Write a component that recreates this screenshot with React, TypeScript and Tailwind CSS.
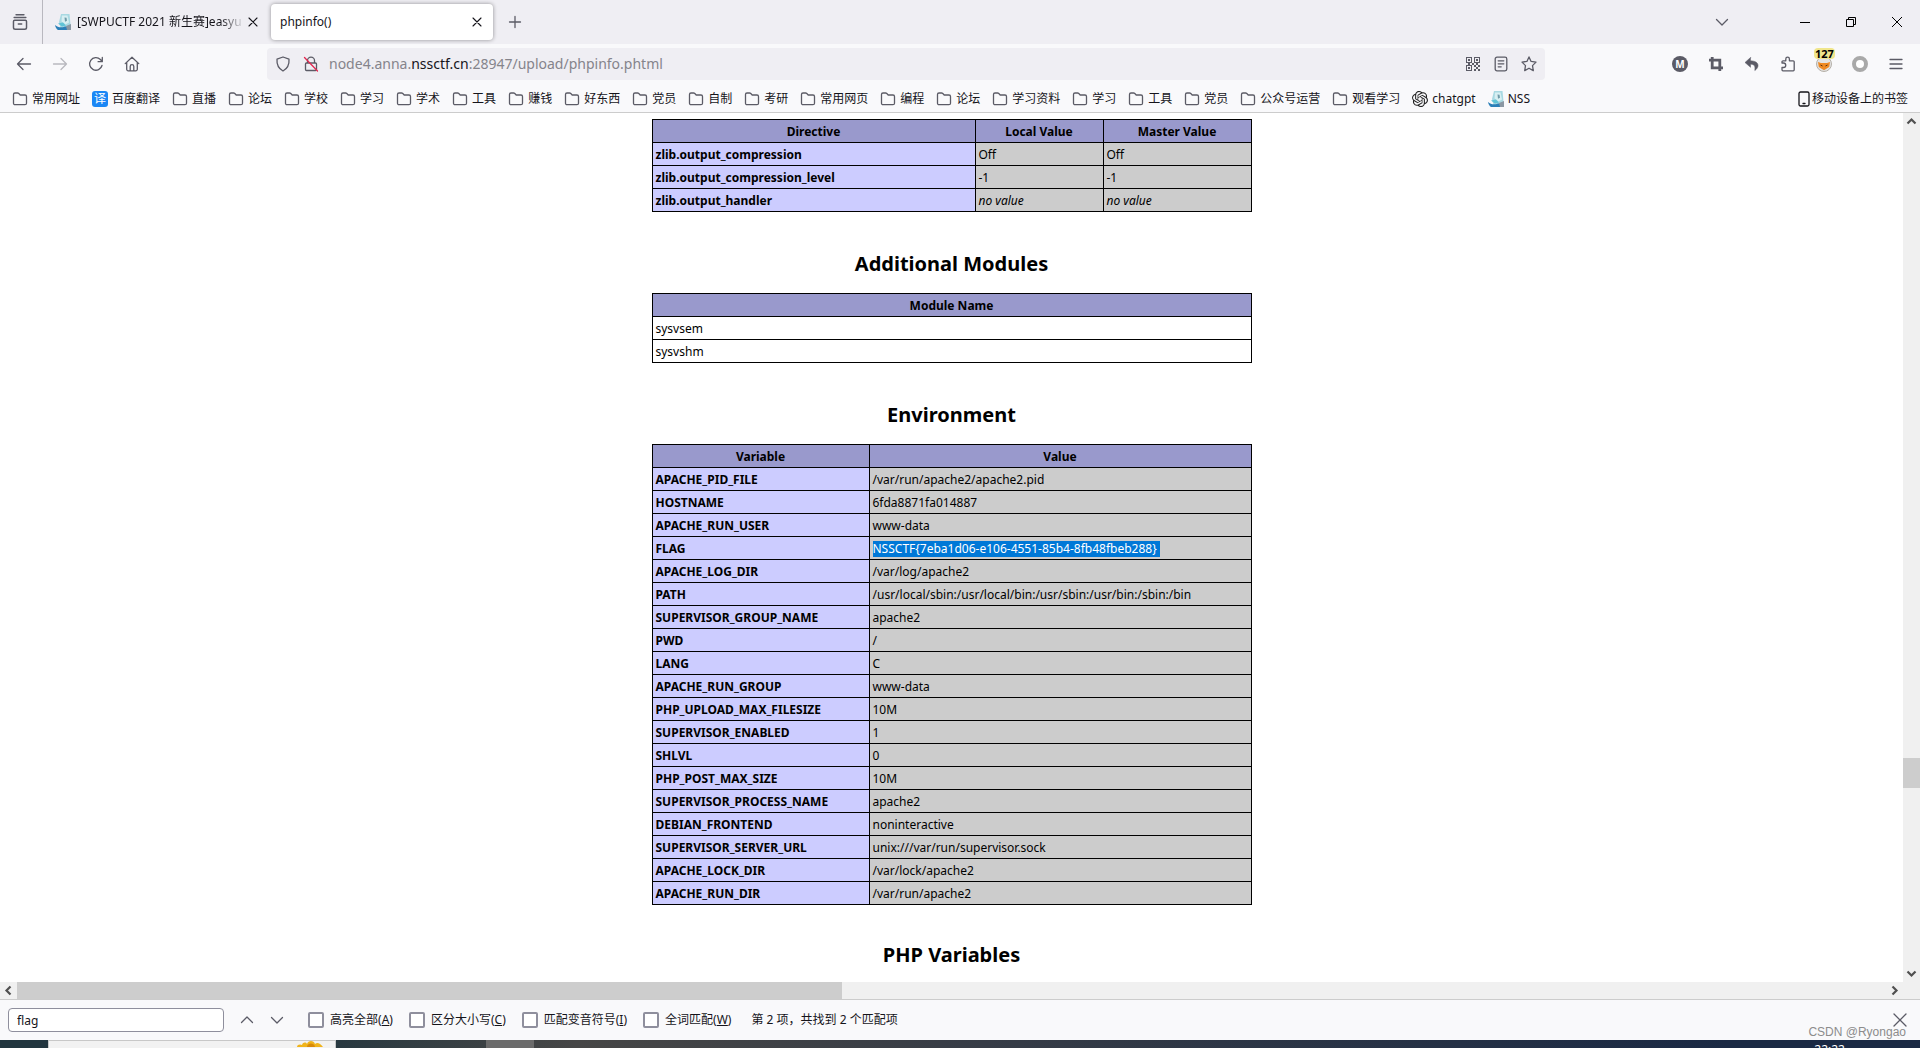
import type { ReactNode } from "react";
import { SiOpenai } from "react-icons/si";

type Row = { name: string; value: string; selected?: boolean };

const DIRECTIVES = [
    { name: "zlib.output_compression", local: "Off", master: "Off" },
    { name: "zlib.output_compression_level", local: "-1", master: "-1" },
    { name: "zlib.output_handler", local: "", master: "" },
];

const MODULES = ["sysvsem", "sysvshm"];

const ENVIRONMENT: Row[] = [
    { name: "APACHE_PID_FILE", value: "/var/run/apache2/apache2.pid" },
    { name: "HOSTNAME", value: "6fda8871fa014887" },
    { name: "APACHE_RUN_USER", value: "www-data" },
    { name: "FLAG", value: "NSSCTF{7eba1d06-e106-4551-85b4-8fb48fbeb288}", selected: true },
    { name: "APACHE_LOG_DIR", value: "/var/log/apache2" },
    { name: "PATH", value: "/usr/local/sbin:/usr/local/bin:/usr/sbin:/usr/bin:/sbin:/bin" },
    { name: "SUPERVISOR_GROUP_NAME", value: "apache2" },
    { name: "PWD", value: "/" },
    { name: "LANG", value: "C" },
    { name: "APACHE_RUN_GROUP", value: "www-data" },
    { name: "PHP_UPLOAD_MAX_FILESIZE", value: "10M" },
    { name: "SUPERVISOR_ENABLED", value: "1" },
    { name: "SHLVL", value: "0" },
    { name: "PHP_POST_MAX_SIZE", value: "10M" },
    { name: "SUPERVISOR_PROCESS_NAME", value: "apache2" },
    { name: "DEBIAN_FRONTEND", value: "noninteractive" },
    { name: "SUPERVISOR_SERVER_URL", value: "unix:///var/run/supervisor.sock" },
    { name: "APACHE_LOCK_DIR", value: "/var/lock/apache2" },
    { name: "APACHE_RUN_DIR", value: "/var/run/apache2" },
];

const BOOKMARKS: { label: string; icon?: "translate" | "gpt" | "nss" }[] = [
    { label: "常用网址" }, { label: "百度翻译", icon: "translate" }, { label: "直播" }, { label: "论坛" },
    { label: "学校" }, { label: "学习" }, { label: "学术" }, { label: "工具" }, { label: "赚钱" },
    { label: "好东西" }, { label: "党员" }, { label: "自制" }, { label: "考研" }, { label: "常用网页" },
    { label: "编程" }, { label: "论坛" }, { label: "学习资料" }, { label: "学习" }, { label: "工具" },
    { label: "党员" }, { label: "公众号运营" }, { label: "观看学习" },
    { label: "chatgpt", icon: "gpt" }, { label: "NSS", icon: "nss" },
];

const FIND_OPTIONS = [
    { id: "highlight", label: "高亮全部", accessKey: "A" },
    { id: "case", label: "区分大小写", accessKey: "C" },
    { id: "diacritics", label: "匹配变音符号", accessKey: "I" },
    { id: "words", label: "全词匹配", accessKey: "W" },
];

function Icon({ children, className = "size-4" }: { children: ReactNode; className?: string }) {
    return (
        <svg viewBox="0 0 16 16" className={`${className} shrink-0`} fill="none" stroke="currentColor" strokeWidth="1.3" strokeLinecap="round" strokeLinejoin="round" aria-hidden="true">
            {children}
        </svg>
    );
}

const FolderIcon = () => (
    <Icon>
        <path d="M1.5 12.2V3.5a1.5 1.5 0 0 1 1.5-1.5h2.6c.5 0 .9.2 1.2.5l1.4 1.5H13a1.5 1.5 0 0 1 1.5 1.5v6.7a1.5 1.5 0 0 1-1.5 1.5H3a1.5 1.5 0 0 1-1.5-1.5z" />
    </Icon>
);

const CloseIcon = ({ className }: { className?: string }) => (
    <Icon className={className}><path d="M4 4l8 8M12 4l-8 8" strokeWidth="1.1" /></Icon>
);

// Site icon of the CTF platform
const NssIcon = () => (
    <svg viewBox="0 0 16 16" className="size-4 shrink-0" aria-hidden="true">
        <path d="M6 0h8.500L16 16H6L4 8z" fill="#a9d9e2" />
        <path d="M7 1.500h5.500l1.500 7-3.500 2-4-3z" fill="#d8eff2" />
        <path d="M9.500 3.500l2 .3.500 3-2 1z" fill="#6f9aa8" />
        <path d="M0 11c3 2.500 6 3 10 1.500L16 13v3H3C1.500 15 .5 13.500 0 11z" fill="#2b7fb8" />
        <path d="M3 9.500l4 3 4-1-3-3z" fill="#5fc3d6" />
        <path d="M11 12l5-2v6h-4z" fill="#8a97a3" />
    </svg>
);

const QrIcon = () => (
    <svg viewBox="0 0 14 14" className="size-[14px]" fill="currentColor" shapeRendering="crispEdges" aria-hidden="true">
        <path fillRule="evenodd" d="M0 0h6v6H0zM1 1v4h4V1zM8 0h6v6H8zM9 1v4h4V1zM0 8h6v6H0zM1 9v4h4V9z" />
        <path d="M2 2h2v2H2zM10 2h2v2h-2zM2 10h2v2H2zM6 6h2v2H6zM8 8h2v2H8zM10 10h2v2h-2zM12 8h2v2h-2zM8 12h2v2H8zM12 12h2v2h-2zM10 6h2v2h-2zM2 6h2v2H2z" />
    </svg>
);

function BookmarkIcon({ icon }: { icon?: string }) {
    if (icon === "translate") return <span className="flex size-4 shrink-0 items-center justify-center rounded-[3px] bg-[#1b87f5] text-xs leading-4 text-white">译</span>;
    if (icon === "gpt") return <SiOpenai className="size-4 shrink-0 text-[#222222]" />;
    if (icon === "nss") return <NssIcon />;
    return <span className="text-[#5b5b66]"><FolderIcon /></span>;
}

function ToolButton({ label, children, className = "" }: { label: string; children: ReactNode; className?: string }) {
    return (
        <button type="button" aria-label={label} className={`flex h-8 w-9 shrink-0 items-center justify-center ${className}`}>
            {children}
        </button>
    );
}

function TabStrip() {
    return (
        <div className="flex h-11 items-center bg-[#efeef3] text-[#15141a]">
            <button type="button" aria-label="Firefox View" className="flex h-full w-[43px] shrink-0 items-center justify-center border-r border-[#b9b8bf] pr-0.5 text-[#5b5b66]">
                <Icon className="size-[18px]">
                    <path d="M4.500 1.500h7M2.800 4h10.400M3.200 6.500h9.600a1 1 0 0 1 1 1v5.400a1.600 1.600 0 0 1-1.600 1.600H3.800a1.600 1.600 0 0 1-1.600-1.600V7.500a1 1 0 0 1 1-1zM6.500 9.800h3" />
                </Icon>
            </button>
            <div className="ml-1 flex h-9 w-[222px] shrink-0 items-center pr-2 pl-2">
                <NssIcon />
                <span className="ml-1.5 min-w-0 flex-1 overflow-hidden text-xs leading-5 whitespace-nowrap [mask-image:linear-gradient(to_right,black_85%,transparent)]">[SWPUCTF 2021 新生赛]easyu</span>
                <button type="button" aria-label="关闭标签页" className="shrink-0"><CloseIcon /></button>
            </div>
            <div className="ml-0.5 flex h-9 w-[222px] shrink-0 items-center rounded bg-white pr-2 pl-[9px] shadow-[0_0_4px_rgba(0,0,0,0.4)]">
                <span className="flex-1 text-xs leading-5">phpinfo()</span>
                <button type="button" aria-label="关闭标签页"><CloseIcon /></button>
            </div>
            <ToolButton label="新建标签页" className="ml-1 text-[#5b5b66]">
                <Icon><path d="M8 2.500v11M2.500 8h11" /></Icon>
            </ToolButton>
            <div className="flex-1" />
            <ToolButton label="列出所有标签页" className="mr-[42px] text-[#5b5b66]">
                <Icon><path d="M2.500 5.500L8 11l5.500-5.500" /></Icon>
            </ToolButton>
            <button type="button" aria-label="最小化" className="flex h-full w-[46px] items-center justify-center"><span className="h-px w-2.5 bg-black" /></button>
            <button type="button" aria-label="还原" className="flex h-full w-[46px] items-center justify-center">
                <svg viewBox="0 0 10 10" className="size-2.5" fill="none" stroke="black" aria-hidden="true"><path d="M.5 2.500h7v7h-7zM2.500 2.500v-2h7v7h-2" /></svg>
            </button>
            <button type="button" aria-label="关闭" className="flex h-full w-[46px] items-center justify-center">
                <svg viewBox="0 0 10 10" className="size-2.5" stroke="black" aria-hidden="true"><path d="M0 0l10 10M10 0L0 10" /></svg>
            </button>
        </div>
    );
}

function NavBar() {
    return (
        <div className="flex h-10 items-center px-1.5 text-[#5b5b66]">
            <ToolButton label="后退"><Icon><path d="M7 2.500L1.500 8 7 13.500M1.500 8h13" /></Icon></ToolButton>
            <ToolButton label="前进" className="opacity-40"><Icon><path d="M9 2.500L14.500 8 9 13.500M14.500 8h-13" /></Icon></ToolButton>
            <ToolButton label="刷新"><Icon><path d="M14 9.500A6.300 6.300 0 1 1 12.400 3.500L14 5.300M14.300 1.500v4.200h-4.200" /></Icon></ToolButton>
            <ToolButton label="主页"><Icon><path d="M1.200 7.600L8 1.200l6.800 6.400M2.700 6.400v6.900a1.500 1.500 0 0 0 1.500 1.500h7.600a1.500 1.500 0 0 0 1.500-1.500V6.400M6.200 14.600V10.400a1.800 1.800 0 0 1 3.600 0v4.200" /></Icon></ToolButton>
            <div className="w-[117px] shrink" />
            <div className="flex h-8 flex-1 items-center rounded bg-[#efeef3] pr-0.5 pl-2">
                <Icon><path d="M8 1l6 2.200c.4 5.300-1.600 9.300-6 11.800C3.600 12.500 1.600 8.500 2 3.200z" /></Icon>
                <span className="ml-3">
                    <Icon>
                        <path d="M4.500 7V4.600a3.500 3.500 0 0 1 7 0V7M3.500 7h9a1 1 0 0 1 1 1v5.500a1 1 0 0 1-1 1h-9a1 1 0 0 1-1-1V8a1 1 0 0 1 1-1z" />
                        <path d="M1.500 1.500l13 13.500" stroke="#e22850" />
                    </Icon>
                </span>
                <div className="ml-2.5 flex-1 text-sm leading-6 whitespace-nowrap text-[#85848b]">
                    node4.anna.<span className="text-[#15141a]">nssctf.cn</span>:28947/upload/phpinfo.phtml
                </div>
                <button type="button" aria-label="二维码" className="flex w-7 justify-center"><QrIcon /></button>
                <button type="button" aria-label="阅读模式" className="flex w-7 justify-center">
                    <Icon><path d="M4 1.200h8a1.800 1.800 0 0 1 1.800 1.800v10a1.800 1.800 0 0 1-1.800 1.800H4A1.800 1.800 0 0 1 2.200 13V3A1.800 1.800 0 0 1 4 1.200zM5.200 4.800h5.600M5.200 7.800h5.600M5.200 10.800h3" /></Icon>
                </button>
                <button type="button" aria-label="添加书签" className="flex w-7 justify-center">
                    <Icon><path d="M8 .9l2.100 4.500 4.900.7-3.500 3.500.8 5L8 12.200l-4.300 2.400.8-5L1 6.100l4.900-.7z" /></Icon>
                </button>
            </div>
            <div className="w-[117px] shrink" />
            <ToolButton label="Markdown">
                <span className="flex size-4 items-center justify-center rounded-full bg-[#5b5b66] text-[10px] leading-4 font-bold text-white">M</span>
            </ToolButton>
            <ToolButton label="截图"><Icon><path d="M4.200 1v10.800H15M1 4.200h10.800V15" strokeWidth="2.800" strokeLinecap="butt" strokeLinejoin="miter" /></Icon></ToolButton>
            <ToolButton label="撤销">
                <Icon><path d="M6.500 1.500L1 6.500l5.500 4.800V8.300c3.500 0 5 1.200 4.300 6.200C15.500 11.500 16 5 6.500 4.700z" fill="currentColor" strokeWidth=".5" /></Icon>
            </ToolButton>
            <ToolButton label="扩展">
                <Icon><path d="M2 7V5.800a1 1 0 0 1 1-1h2.800V2.900a1.800 1.800 0 0 1 3.600 0v1.900h3.800a1 1 0 0 1 1 1v8a1 1 0 0 1-1 1H3a1 1 0 0 1-1-1v-2.300h1.500a2.200 2.200 0 0 0 0-4.500z" /></Icon>
            </ToolButton>
            <ToolButton label="代理扩展" className="relative">
                <svg viewBox="0 0 16 16" className="size-4" aria-hidden="true">
                    <circle cx="8" cy="8" r="7.500" fill="#e3e3e3" stroke="#b5b0a8" />
                    <path d="M2 6l3 1h6l3-1-.8 5L8 14.300 2.800 11z" fill="#ef8a24" />
                    <path d="M4.500 9l2 1M11.500 9l-2 1" stroke="#5b3210" />
                </svg>
                <span className="absolute top-0 left-2 rounded-sm bg-[#f0e68c] px-px text-[11px] leading-[11px] font-bold text-black">127</span>
            </ToolButton>
            <ToolButton label="扩展状态"><span className="size-4 rounded-full border-4 border-[#a9a9a9] bg-white" /></ToolButton>
            <ToolButton label="应用程序菜单"><Icon><path d="M2 3.500h12M2 8h12M2 12.500h12" /></Icon></ToolButton>
        </div>
    );
}

function BookmarksBar() {
    return (
        <nav className="flex h-7 items-center gap-3 overflow-hidden px-3 pt-0.5 text-xs leading-4 whitespace-nowrap text-[#15141a]">
            {BOOKMARKS.map((b, i) => (
                <a key={i} href="#" className="flex shrink-0 items-center gap-1"><BookmarkIcon icon={b.icon} />{b.label}</a>
            ))}
            <a href="#" className="ml-auto flex shrink-0 items-center">
                <Icon><path d="M4.500 1h7A1.500 1.500 0 0 1 13 2.500v11a1.500 1.500 0 0 1-1.500 1.500h-7A1.500 1.500 0 0 1 3 13.500v-11A1.500 1.500 0 0 1 4.500 1zM7 12.500h2" /></Icon>
                移动设备上的书签
            </a>
        </nav>
    );
}

const table = "w-full table-fixed border-collapse text-xs leading-4";
const th = "h-[23px] border border-black bg-[#9999cc] px-[3px] pt-0.5 pb-0 text-center font-bold";
const key = "h-[23px] border border-black bg-[#ccccff] px-[3px] pt-0.5 pb-0 text-left font-bold";
const val = "h-[23px] border border-black bg-[#cccccc] px-[3px] pt-0.5 pb-0";
const heading = "mt-[38px] mb-[15px] text-center text-xl leading-7 font-bold";

function PhpInfo() {
    return (
        <div className="mx-auto w-[600px] max-w-full pt-1.5 pb-2.5 text-black">
            <table className={table}>
                <thead>
                    <tr><th className={th}>Directive</th><th className={`${th} w-32`}>Local Value</th><th className={`${th} w-[148px]`}>Master Value</th></tr>
                </thead>
                <tbody>
                    {DIRECTIVES.map(d => (
                        <tr key={d.name}>
                            <th scope="row" className={key}>{d.name}</th>
                            <td className={val}>{d.local || <i>no value</i>}</td>
                            <td className={val}>{d.master || <i>no value</i>}</td>
                        </tr>
                    ))}
                </tbody>
            </table>

            <h2 className={heading}>Additional Modules</h2>
            <table className={table}>
                <thead><tr><th className={th}>Module Name</th></tr></thead>
                <tbody>
                    {MODULES.map(m => <tr key={m}><td className="h-[23px] border border-black px-[3px] pt-0.5 pb-0">{m}</td></tr>)}
                </tbody>
            </table>

            <h2 className={heading}>Environment</h2>
            <table className={table}>
                <thead><tr><th className={`${th} w-[217px]`}>Variable</th><th className={th}>Value</th></tr></thead>
                <tbody>
                    {ENVIRONMENT.map(r => (
                        <tr key={r.name}>
                            <th scope="row" className={key}>{r.name}</th>
                            <td className={val}>
                                {r.selected ? <span className="inline-block bg-[#0078d7] pr-[3px] align-top text-white">{r.value}</span> : r.value}
                            </td>
                        </tr>
                    ))}
                </tbody>
            </table>

            <h2 className="mt-9 text-center text-xl leading-7 font-bold">PHP Variables</h2>
        </div>
    );
}

function ScrollArrow({ d }: { d: string }) {
    return (
        <svg viewBox="0 0 17 17" className="size-[17px] shrink-0" fill="none" stroke="#505050" strokeWidth="2.200" aria-hidden="true"><path d={d} /></svg>
    );
}

function FindBar() {
    return (
        <div className="flex h-10 items-center bg-[#f9f9fb] px-2 text-xs leading-4 text-[#15141a]">
            <input aria-label="在页面中查找" defaultValue="flag" className="h-6 w-[216px] rounded border border-[#8f8f9d] bg-white px-2 outline-none" />
            <button type="button" aria-label="上一个" className="ml-2 flex w-[30px] justify-center text-[#5b5b66]"><Icon><path d="M2.500 10.500L8 5l5.500 5.500" /></Icon></button>
            <button type="button" aria-label="下一个" className="flex w-[30px] justify-center text-[#5b5b66]"><Icon><path d="M2.500 5.500L8 11l5.500-5.500" /></Icon></button>
            <div className="ml-4 flex items-center gap-4">
                {FIND_OPTIONS.map(o => (
                    <label key={o.id} htmlFor={o.id} className="flex items-center gap-1.5">
                        <input id={o.id} type="checkbox" className="size-4 appearance-none rounded-xs border-2 border-[#8f8f9d] bg-white" />
                        <span>{o.label}(<u>{o.accessKey}</u>)</span>
                    </label>
                ))}
            </div>
            <span className="ml-5">第 2 项，共找到 2 个匹配项</span>
            <button type="button" aria-label="关闭查找栏" className="ml-auto mr-1 text-[#5b5b66]"><Icon><path d="M2 2l12 12M14 2L2 14" /></Icon></button>
        </div>
    );
}

// Only the top edge of the desktop taskbar is visible under the window
function Taskbar() {
    return (
        <div className="flex h-2 items-start overflow-hidden bg-linear-to-r from-[#22363f] from-15% via-[#464646] via-30% to-[#1a2944] to-90%">
            <div className="ml-12 flex h-2 w-[288px] shrink-0 justify-end border border-b-0 border-[#c8c8c8] bg-[#f2f2f2] pr-3">
                <svg viewBox="0 0 26 6" className="h-1.5 w-[26px]" aria-hidden="true">
                    <path d="M0 6c0-3 4-3 5-2 1-3 4-3 5-1 1-4 7-4 8 0 2-2 5-1 8 3z" fill="#f0b41c" />
                    <path d="M10 6c0-4 7-5 8 0z" fill="#d98a08" />
                </svg>
            </div>
            <div className="ml-[150px] h-2 w-12 shrink-0 bg-[#6b6b6b]" />
            <span className="mr-[75px] ml-auto pt-0.5 text-xs leading-4 text-white">22:22</span>
        </div>
    );
}

export default function App() {
    return (
        <div className="relative flex h-screen flex-col overflow-hidden bg-white font-['Noto_Sans','Noto_Sans_CJK_SC',sans-serif]">
            <header className="shrink-0 border-b border-[#cccccc] bg-[#f9f9fb]">
                <TabStrip />
                <NavBar />
                <BookmarksBar />
            </header>

            <div className="flex min-h-0 flex-1">
                <main className="min-w-0 flex-1 overflow-hidden"><PhpInfo /></main>
                <div className="flex w-[17px] shrink-0 flex-col bg-[#f0f0f0]">
                    <ScrollArrow d="M4.500 10.500l4-4 4 4" />
                    <div className="grow-[627]" />
                    <div className="h-[30px] bg-[#cdcdcd]" />
                    <div className="grow-[177]" />
                    <ScrollArrow d="M4.500 6.500l4 4 4-4" />
                </div>
            </div>
            <div className="flex h-[18px] shrink-0 items-center border-b border-[#cccccc] bg-[#f0f0f0]">
                <ScrollArrow d="M10.500 4.500l-4 4 4 4" />
                <div className="h-[17px] grow-[825] bg-[#cdcdcd]" />
                <div className="grow-[1044]" />
                <ScrollArrow d="M6.500 4.500l4 4-4 4" />
                <div className="w-[17px]" />
            </div>

            <FindBar />
            <Taskbar />
            <div className="absolute right-3.5 bottom-2 font-['Liberation_Sans',sans-serif] text-xs leading-4 text-[#8c8c8c]">CSDN @Ryongao</div>
        </div>
    );
}
